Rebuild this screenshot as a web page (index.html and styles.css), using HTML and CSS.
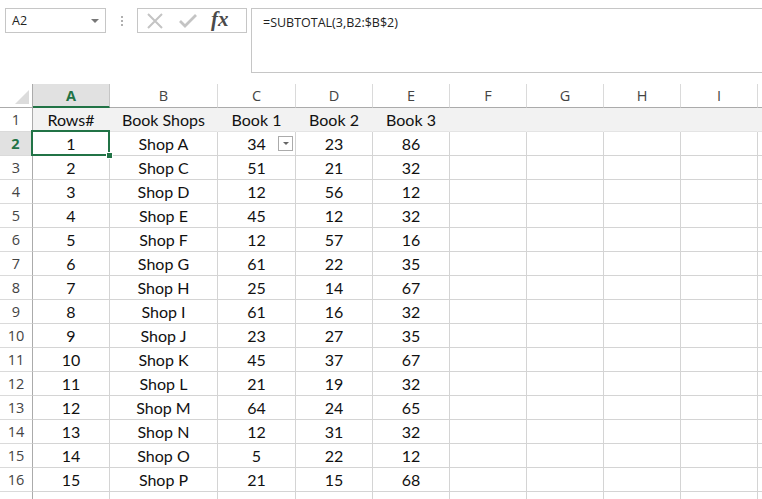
FILE: index.html
```html
<!DOCTYPE html>
<html>
<head>
<meta charset="utf-8">
<link rel="stylesheet" href="styles.css">
</head>
<body>
<div class="app">
  <div class="fbar">
    <div class="namebox"><span class="nb-text">A2</span><span class="nb-caret"></span></div>
    <div class="dots"><i></i><i></i><i></i></div>
    <div class="fxbox">
      <svg class="ic-x" width="18" height="18" viewBox="0 0 18 18"><path d="M2 2 L16 16 M16 2 L2 16" stroke="#c4c4c4" stroke-width="2" fill="none"/></svg>
      <svg class="ic-ok" width="20" height="18" viewBox="0 0 20 18"><path d="M2 9 L7 14 L18 3" stroke="#c4c4c4" stroke-width="2.8" fill="none"/></svg>
      <span class="fx">fx</span>
    </div>
    <div class="formula">=SUBTOTAL(3,B2:$B$2)</div>
  </div>
  <div class="sheet">
    <div class="corner"><span class="tri"></span></div>
    <div class="ch sel">A</div><div class="ch">B</div><div class="ch">C</div><div class="ch">D</div><div class="ch">E</div><div class="ch">F</div><div class="ch">G</div><div class="ch">H</div><div class="ch">I</div><div class="ch last"></div>

    <div class="rh">1</div>
    <div class="c hd">Rows#</div><div class="c hd">Book Shops</div><div class="c hd">Book 1</div><div class="c hd">Book 2</div><div class="c hd">Book 3</div><div class="c hd"></div><div class="c hd"></div><div class="c hd"></div><div class="c hd"></div><div class="c hd last"></div>

    <div class="rh sel">2</div>
    <div class="c active">1<span class="handle"></span></div><div class="c">Shop A</div><div class="c dd">34<span class="ddbtn"></span></div><div class="c">23</div><div class="c">86</div><div class="c"></div><div class="c"></div><div class="c"></div><div class="c"></div><div class="c last"></div>

    <div class="rh">3</div><div class="c">2</div><div class="c">Shop C</div><div class="c">51</div><div class="c">21</div><div class="c">32</div><div class="c"></div><div class="c"></div><div class="c"></div><div class="c"></div><div class="c last"></div>
    <div class="rh">4</div><div class="c">3</div><div class="c">Shop D</div><div class="c">12</div><div class="c">56</div><div class="c">12</div><div class="c"></div><div class="c"></div><div class="c"></div><div class="c"></div><div class="c last"></div>
    <div class="rh">5</div><div class="c">4</div><div class="c">Shop E</div><div class="c">45</div><div class="c">12</div><div class="c">32</div><div class="c"></div><div class="c"></div><div class="c"></div><div class="c"></div><div class="c last"></div>
    <div class="rh">6</div><div class="c">5</div><div class="c">Shop F</div><div class="c">12</div><div class="c">57</div><div class="c">16</div><div class="c"></div><div class="c"></div><div class="c"></div><div class="c"></div><div class="c last"></div>
    <div class="rh">7</div><div class="c">6</div><div class="c">Shop G</div><div class="c">61</div><div class="c">22</div><div class="c">35</div><div class="c"></div><div class="c"></div><div class="c"></div><div class="c"></div><div class="c last"></div>
    <div class="rh">8</div><div class="c">7</div><div class="c">Shop H</div><div class="c">25</div><div class="c">14</div><div class="c">67</div><div class="c"></div><div class="c"></div><div class="c"></div><div class="c"></div><div class="c last"></div>
    <div class="rh">9</div><div class="c">8</div><div class="c">Shop I</div><div class="c">61</div><div class="c">16</div><div class="c">32</div><div class="c"></div><div class="c"></div><div class="c"></div><div class="c"></div><div class="c last"></div>
    <div class="rh">10</div><div class="c">9</div><div class="c">Shop J</div><div class="c">23</div><div class="c">27</div><div class="c">35</div><div class="c"></div><div class="c"></div><div class="c"></div><div class="c"></div><div class="c last"></div>
    <div class="rh">11</div><div class="c">10</div><div class="c">Shop K</div><div class="c">45</div><div class="c">37</div><div class="c">67</div><div class="c"></div><div class="c"></div><div class="c"></div><div class="c"></div><div class="c last"></div>
    <div class="rh">12</div><div class="c">11</div><div class="c">Shop L</div><div class="c">21</div><div class="c">19</div><div class="c">32</div><div class="c"></div><div class="c"></div><div class="c"></div><div class="c"></div><div class="c last"></div>
    <div class="rh">13</div><div class="c">12</div><div class="c">Shop M</div><div class="c">64</div><div class="c">24</div><div class="c">65</div><div class="c"></div><div class="c"></div><div class="c"></div><div class="c"></div><div class="c last"></div>
    <div class="rh">14</div><div class="c">13</div><div class="c">Shop N</div><div class="c">12</div><div class="c">31</div><div class="c">32</div><div class="c"></div><div class="c"></div><div class="c"></div><div class="c"></div><div class="c last"></div>
    <div class="rh">15</div><div class="c">14</div><div class="c">Shop O</div><div class="c">5</div><div class="c">22</div><div class="c">12</div><div class="c"></div><div class="c"></div><div class="c"></div><div class="c"></div><div class="c last"></div>
    <div class="rh">16</div><div class="c">15</div><div class="c">Shop P</div><div class="c">21</div><div class="c">15</div><div class="c">68</div><div class="c"></div><div class="c"></div><div class="c"></div><div class="c"></div><div class="c last"></div>
    <div class="rh"></div><div class="c"></div><div class="c"></div><div class="c"></div><div class="c"></div><div class="c"></div><div class="c"></div><div class="c"></div><div class="c"></div><div class="c"></div><div class="c last"></div>
  </div>
</div>
</body>
</html>
```

FILE: styles.css
```css
html, body {
  margin: 0;
  padding: 0;
  background: #ffffff;
  overflow: hidden;
}
.app {
  width: 762px;
  height: 499px;
  overflow: hidden;
  font-family: "Open Sans", "Liberation Sans", sans-serif;
}
.fbar {
  display: flex;
  align-items: flex-start;
  padding: 8px 0 0 5px;
  height: 76px;
  box-sizing: border-box;
}
.namebox {
  width: 101px;
  height: 25px;
  box-sizing: border-box;
  border: 1px solid #c6c6c6;
  display: flex;
  align-items: center;
  justify-content: space-between;
  padding: 0 6px 0 6px;
  font-size: 12.5px;
  color: #222;
}
.nb-caret {
  width: 0;
  height: 0;
  border-left: 4px solid transparent;
  border-right: 4px solid transparent;
  border-top: 4px solid #777;
}
.dots {
  width: 31px;
  height: 25px;
  display: flex;
  flex-direction: column;
  align-items: center;
  justify-content: center;
  gap: 2px;
}
.dots i {
  display: block;
  width: 2px;
  height: 2px;
  background: #b0b0b0;
}
.fxbox {
  width: 110px;
  height: 25px;
  box-sizing: border-box;
  border: 1px solid #c6c6c6;
  display: flex;
  align-items: center;
  padding: 0 0 0 8px;
}
.ic-x { margin-right: 14px; }
.ic-ok { margin-right: 13px; }
.fx {
  font-family: "Liberation Serif", "DejaVu Serif", serif;
  font-style: italic;
  font-weight: bold;
  font-size: 21px;
  color: #4a4a4a;
  letter-spacing: 0;
  line-height: 1;
  margin-top: -3px;
}
.formula {
  margin-left: 4px;
  flex: 1;
  height: 65px;
  box-sizing: border-box;
  border: 1px solid #c6c6c6;
  border-right: none;
  padding: 5px 0 0 11px;
  font-size: 12.5px;
  color: #222;
}
.sheet {
  margin-top: 8px;
  display: grid;
  grid-template-columns: 33px 77px 108px 78px 77px 77px 77px 77px 77px 77px 4px;
  grid-auto-rows: 24px;
}
.corner {
  position: relative;
  border-right: 1px solid #ababab;
  border-bottom: 1px solid #ababab;
  box-sizing: border-box;
}
.tri {
  position: absolute;
  right: 3px;
  bottom: 3px;
  width: 0;
  height: 0;
  border-left: 14px solid transparent;
  border-bottom: 14px solid #dcdcdc;
}
.ch {
  box-sizing: border-box;
  border-right: 1px solid #dadada;
  border-bottom: 1px solid #ababab;
  display: flex;
  align-items: center;
  justify-content: center;
  font-size: 14.5px;
  color: #444;
}
.ch.sel {
  background: #e1e1e1;
  color: #217346;
  font-weight: bold;
  border-bottom: 2px solid #217346;
  border-right-color: #c6c6c6;
}
.ch.last { border-right: none; }
.rh {
  box-sizing: border-box;
  border-right: 1px solid #ababab;
  border-bottom: 1px solid #dadada;
  display: flex;
  align-items: center;
  justify-content: center;
  font-size: 14.5px;
  color: #444;
}
.rh.sel {
  background: #e1e1e1;
  color: #217346;
  font-weight: bold;
  border-right: 2px solid #217346;
}
.c {
  position: relative;
  box-sizing: border-box;
  border-right: 1px solid #d4d4d4;
  border-bottom: 1px solid #d4d4d4;
  display: flex;
  align-items: center;
  justify-content: center;
  font-family: "Lato", "Liberation Sans", sans-serif;
  font-size: 16px;
  color: #111;
  padding-bottom: 1px;
}
.c.last { border-right: none; }
.c.hd {
  background: #f2f2f2;
  border-right-color: #f2f2f2;
  border-bottom-color: #e4e4e4;
}
.c.active::before {
  content: "";
  position: absolute;
  left: -2px;
  top: -2px;
  right: -1px;
  bottom: -1px;
  border: 2px solid #217346;
}
.handle {
  position: absolute;
  right: -4px;
  bottom: -4px;
  width: 5px;
  height: 5px;
  background: #217346;
  border: 1px solid #fff;
  z-index: 2;
}
.ddbtn {
  position: absolute;
  right: 2px;
  top: 4px;
  width: 15px;
  height: 15px;
  box-sizing: border-box;
  border: 1px solid #ababab;
  background: #fff;
}
.ddbtn::after {
  content: "";
  position: absolute;
  left: 4px;
  top: 5px;
  border-left: 3px solid transparent;
  border-right: 3px solid transparent;
  border-top: 3px solid #666;
}
```
